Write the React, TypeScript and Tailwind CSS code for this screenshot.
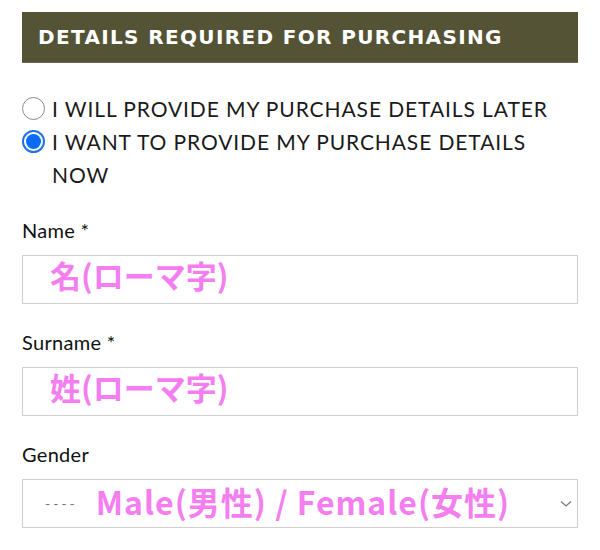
import React from "react";

const pink = "text-[#f47ef0] font-bold [font-family:'Noto_Sans_CJK_JP','Noto_Sans',sans-serif]";

function Field({ label, children }: { label: string; children: React.ReactNode }) {
  return (
    <div className="flex flex-col">
      <div className="text-[20px] leading-[24px] tracking-[0.3px] text-[#111] [font-family:Lato,sans-serif] h-[24px]">
        {label}
      </div>
      <div className="mt-[13px] h-[49px] border border-[#cfcfcf] bg-white flex items-center">
        {children}
      </div>
    </div>
  );
}

export default function App() {
  return (
    <div className="w-[600px] h-[550px] bg-white px-[22px] pt-[12px] [font-family:Lato,sans-serif]">
      <div className="h-[51px] bg-[#545336] flex items-center pl-[16px] border-b border-[#6b6a52]">
        <span className="text-white font-bold text-[20px] tracking-[1.35px] [font-family:'DejaVu_Sans',sans-serif]">
          DETAILS REQUIRED FOR PURCHASING
        </span>
      </div>

      <div className="mt-[29px] flex flex-col text-[21px] leading-[33px] tracking-[0.9px] text-[#1a1a1a] [font-family:Lato,sans-serif]">
        <label className="flex items-start">
          <span className="mt-[5px] w-[23px] h-[23px] rounded-full border border-[#8a8a8a] bg-white shrink-0" />
          <span className="ml-[7px] whitespace-nowrap">I WILL PROVIDE MY PURCHASE DETAILS LATER</span>
        </label>
        <label className="flex items-start">
          <span className="mt-[5px] w-[23px] h-[23px] rounded-full border-[2px] border-[#1a73e8] bg-white shrink-0 flex items-center justify-center">
            <span className="w-[15px] h-[15px] rounded-full bg-[#0a6cf5]" />
          </span>
          <span className="ml-[7px] whitespace-nowrap">
            I WANT TO PROVIDE MY PURCHASE DETAILS
            <br />
            NOW
          </span>
        </label>
      </div>

      <div className="mt-[27px] flex flex-col gap-[26px]">
        <Field label="Name *">
          <span className={`ml-[27px] text-[31px] leading-none -translate-y-[5px] ${pink}`}>名(ローマ字)</span>
        </Field>
        <Field label="Surname *">
          <span className={`ml-[27px] text-[31px] leading-none -translate-y-[5px] ${pink}`}>姓(ローマ字)</span>
        </Field>
        <Field label="Gender">
          <div className="flex items-center w-full">
            <span className="ml-[22px] text-[14px] text-[#777] tracking-[3px]">----</span>
            <span className={`ml-[18px] text-[32px] leading-none tracking-[1px] -translate-y-[3px] ${pink}`}>
              Male(男性) / Female(女性)
            </span>
            <svg className="ml-auto mr-[5px]" width="12" height="8" viewBox="0 0 12 8">
              <path d="M1 1.5 L6 6 L11 1.5" fill="none" stroke="#777" strokeWidth="1.2" />
            </svg>
          </div>
        </Field>
      </div>
    </div>
  );
}
